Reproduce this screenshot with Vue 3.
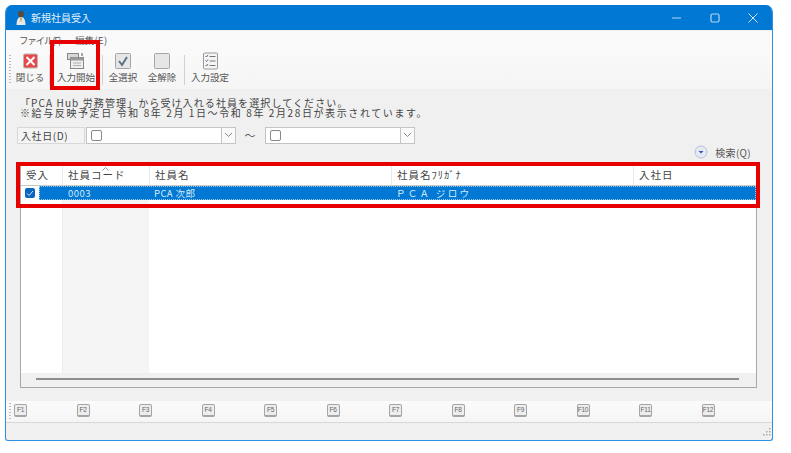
<script setup>
const columns = [
  { label: '受入', width: 42 },
  { label: '社員コード', width: 87, sorted: true },
  { label: '社員名', width: 242 },
  { label: '社員名ﾌﾘｶﾞﾅ', width: 242 },
  { label: '入社日', width: 122 },
]
const fkeys = ['F1','F2','F3','F4','F5','F6','F7','F8','F9','F10','F11','F12']
</script>

<template>
  <div class="page">
    <div class="window">
      <header class="title">
        <svg class="app-icon" width="12" height="16" viewBox="0 0 12 16">
          <ellipse cx="6" cy="4" rx="3" ry="3.2" fill="#5a4a3a"/>
          <path d="M1.5 15c0-5 1.5-8 4.500-8s4.500 3 4.500 8z" fill="#e8e8e8"/>
          <path d="M5 7.500h2l-.5 4h-1z" fill="#c9a24a"/>
        </svg>
        <span class="title-text">新規社員受入</span>
        <div class="caption">
          <svg width="12" height="12" viewBox="0 0 12 12"><path d="M1 6h9" stroke="#b5d5f0" stroke-width="1"/></svg>
          <svg width="12" height="12" viewBox="0 0 12 12"><rect x="2" y="2" width="8" height="8" rx="1.500" fill="none" stroke="#b5d5f0" stroke-width="1.200"/></svg>
          <svg width="12" height="12" viewBox="0 0 12 12"><path d="M1.500 1.500l9 9M10.500 1.500l-9 9" stroke="#cfe4f5" stroke-width="1"/></svg>
        </div>
      </header>

      <nav class="menu">
        <span class="m-file">ファイル(F)</span>
        <span class="m-edit">編集(E)</span>
      </nav>

      <div class="toolbar">
        <div class="grip"></div>
        <button class="tool t-close">
          <svg width="15" height="15" viewBox="0 0 15 15">
            <rect x=".5" y=".5" width="14" height="14" rx="1.500" fill="#e8484a" stroke="#b9b9b9"/>
            <path d="M3.500 3.500l8 8M11.500 3.500l-8 8" stroke="#fff" stroke-width="2"/>
          </svg>
          <span>閉じる</span>
        </button>
        <i class="sep"></i>
        <button class="tool t-start">
          <svg width="18" height="16" viewBox="0 0 18 16">
            <rect x=".5" y=".5" width="11" height="6" fill="#d8d8d8" stroke="#888"/>
            <rect x="3.500" y="4.500" width="13" height="11" fill="#eee" stroke="#888"/>
            <rect x="3.500" y="4.500" width="13" height="3" fill="#9a9a9a"/>
            <path d="M6 10h8M6 12.500h8" stroke="#b0b0b0"/>
            <path d="M15 0v3" stroke="#555"/>
          </svg>
          <span>入力開始</span>
        </button>
        <i class="sep"></i>
        <button class="tool t-all">
          <svg width="16" height="16" viewBox="0 0 16 16">
            <rect x=".5" y=".5" width="15" height="15" rx="1" fill="#e6e6e6" stroke="#a5a5a5"/>
            <path d="M4 8l3 4 5-8" fill="none" stroke="#5c7488" stroke-width="2"/>
          </svg>
          <span>全選択</span>
        </button>
        <button class="tool t-none">
          <svg width="16" height="16" viewBox="0 0 16 16">
            <rect x=".5" y=".5" width="15" height="15" rx="1" fill="#e6e6e6" stroke="#a5a5a5"/>
          </svg>
          <span>全解除</span>
        </button>
        <i class="sep"></i>
        <button class="tool t-set">
          <svg width="15" height="17" viewBox="0 0 15 17">
            <rect x=".5" y=".5" width="14" height="16" rx="1" fill="#f5f5f5" stroke="#999"/>
            <path d="M6.500 4h6M6.500 8.500h6M6.500 13h6" stroke="#777"/>
            <path d="M2.500 3.500l1 1 1.500-2M2.500 8l1 1 1.500-2M2.500 12.500l1 1 1.500-2" fill="none" stroke="#557" stroke-width=".9"/>
          </svg>
          <span>入力設定</span>
        </button>
      </div>

      <main class="body">
        <div class="notes">
          <p class="n1">「PCA Hub 労務管理」から受け入れる社員を選択してください。</p>
          <p class="n2">※給与反映予定日 令和 8年 2月 1日～令和 8年 2月28日が表示されています。</p>
        </div>

        <div class="filter">
          <label class="filter-label">入社日(D)</label>
          <div class="date">
            <i class="cb"></i>
            <span class="drop"><svg width="9" height="6" viewBox="0 0 9 6"><path d="M1 1l3.500 3.500L8 1" fill="none" stroke="#8a8a8a"/></svg></span>
          </div>
          <span class="tilde">～</span>
          <div class="date">
            <i class="cb"></i>
            <span class="drop"><svg width="9" height="6" viewBox="0 0 9 6"><path d="M1 1l3.500 3.500L8 1" fill="none" stroke="#8a8a8a"/></svg></span>
          </div>
        </div>

        <div class="search">
          <svg width="14" height="14" viewBox="0 0 14 14">
            <circle cx="7" cy="7" r="6" fill="#e4e9f4" stroke="#b4bfd6"/>
            <path d="M4.500 6h5L7 8.500z" fill="#3a55a8"/>
          </svg>
          <span>検索(Q)</span>
        </div>

        <div class="grid">
          <div class="head">
            <div v-for="c in columns" :key="c.label" class="hcell" :style="{ width: c.width + 'px' }">
              <svg v-if="c.sorted" class="sort" width="7" height="4" viewBox="0 0 7 4"><path d="M.5 3.500l3-3 3 3" fill="none" stroke="#999"/></svg>
              {{ c.label }}
            </div>
          </div>
          <div class="row">
            <div class="check-cell">
              <span class="check">
                <svg width="8" height="7" viewBox="0 0 8 7"><path d="M1 3.500l2 2 4-4.500" fill="none" stroke="#cfe3f5" stroke-width="1"/></svg>
              </span>
            </div>
            <div class="selected">
              <span class="c-code">0003</span>
              <span class="c-name">PCA 次郎</span>
              <span class="c-kana">ＰＣＡ ジロウ</span>
            </div>
          </div>
          <div class="rows-fill">
            <div class="fill-a"></div>
            <div class="fill-b"></div>
          </div>
          <div class="hscroll"><i></i></div>
        </div>
      </main>

      <div class="fbar">
        <div class="grip small"></div>
        <div class="fkeys">
          <div v-for="k in fkeys" :key="k" class="fslot"><span class="fkey">{{ k }}</span></div>
        </div>
      </div>

      <footer class="status">
        <svg class="size-grip" width="11" height="11" viewBox="0 0 11 11" fill="#aaa">
          <rect x="8" y="0" width="1.500" height="1.500"/><rect x="8" y="3" width="1.500" height="1.500"/><rect x="5" y="3" width="1.500" height="1.500"/>
          <rect x="8" y="6" width="1.500" height="1.500"/><rect x="5" y="6" width="1.500" height="1.500"/><rect x="2" y="6" width="1.500" height="1.500"/>
        </svg>
      </footer>
    </div>

    <div class="mark mark-a"></div>
    <div class="mark mark-b"></div>
  </div>
</template>

<style>
html, body { margin: 0; background: #fff; }
</style>

<style scoped>
.page {
  position: relative;
  width: 791px;
  height: 453px;
  padding: 5px 0 0 5px;
  box-sizing: border-box;
  overflow: hidden;
  background: #fff;
  font-family: "Noto Sans CJK JP", "Noto Sans", sans-serif;
  font-size: 10px;
  color: #444;
}
.window {
  width: 768px;
  height: 436px;
  box-sizing: border-box;
  border: 1px solid #2f8fe0;
  border-top: 0;
  border-radius: 7px 7px 3px 3px;
  overflow: hidden;
  background: #f0f0f0;
  display: flex;
  flex-direction: column;
}
.title {
  height: 25px;
  flex: none;
  background: #0078d4;
  display: flex;
  align-items: center;
  padding-left: 9px;
  box-sizing: border-box;
  color: #e6f2fb;
}
.app-icon { flex: none; }
.title-text { margin-left: 4px; font-size: 10px; }
.caption { margin-left: auto; display: flex; gap: 26px; padding-right: 13px; align-items: center; }
.caption svg { display: block; }
.menu {
  height: 20px;
  flex: none;
  margin-top: 1px;
  background: #f9f9f9;
  display: flex;
  padding: 1px 0 0 13px;
  box-sizing: border-box;
  font-size: 9.500px;
  line-height: 16px;
  color: #555;
}
.m-file { width: 56px; flex: none; letter-spacing: -1.200px; white-space: nowrap; }
.m-edit { flex: none; letter-spacing: .3px; white-space: nowrap; }
.toolbar {
  height: 38px;
  flex: none;
  background: linear-gradient(#fafafa, #f5f5f5);
  display: flex;
  align-items: flex-start;
  padding: 1px 0 0 3px;
  box-sizing: border-box;
}
.grip {
  width: 2px;
  height: 30px;
  margin-top: 3px;
  background: repeating-linear-gradient(#bbb 0 1px, transparent 1px 3px);
  flex: none;
}
.grip.small { height: 16px; margin: 2px 0 0 0; }
.tool {
  all: unset;
  display: flex;
  flex-direction: column;
  align-items: center;
  height: 34px;
  font-size: 9.500px;
  line-height: 13px;
  color: #555;
  white-space: nowrap;
  flex: none;
}
.tool svg { display: block; height: 18px; margin-bottom: 1px; }
.t-close { width: 38px; }
.t-start { width: 52px; }
.t-all { width: 40px; }
.t-none { width: 38px; margin-right: 3px; }
.t-set { width: 50px; }
.sep { width: 1px; height: 30px; margin-top: 3px; background: #d2d2d2; flex: none; }
.body { flex: none; height: 312px; padding: 9px 14px 0; box-sizing: border-box; display: flex; flex-direction: column; }
.notes { font-size: 10px; line-height: 10px; color: #444; }
.notes p { margin: 0; white-space: nowrap; }
.n1 { letter-spacing: 1.100px; }
.n2 { letter-spacing: 1.600px; }
.filter { display: flex; align-items: center; height: 18px; margin: 8px 0 0 -3px; }
.filter-label {
  width: 68px;
  height: 17px;
  box-sizing: border-box;
  background: #f4f4f4;
  border: 1px solid #d8d8d8;
  padding-left: 3px;
  line-height: 15px;
  font-size: 10px;
  letter-spacing: .6px;
  color: #444;
}
.date {
  width: 150px;
  height: 17px;
  box-sizing: border-box;
  border: 1px solid #c4c4c4;
  background: #fff;
  display: flex;
  align-items: center;
  margin-left: 1px;
}
.cb { width: 9px; height: 9px; border: 1px solid #888; border-radius: 2px; margin-left: 4px; }
.drop {
  margin-left: auto;
  width: 13px;
  height: 15px;
  border-left: 1px solid #c4c4c4;
  background: #fafafa;
  display: flex;
  align-items: center;
  justify-content: center;
}
.tilde { width: 28px; text-align: center; font-size: 11px; color: #555; }
.search {
  align-self: flex-end;
  display: flex;
  align-items: center;
  gap: 7px;
  height: 14px;
  margin: 1px 7px 1px 0;
  font-size: 10px;
  letter-spacing: .3px;
  color: #555;
}
.grid {
  width: 737px;
  height: 223px;
  flex: none;
  margin: 5px 0 0 0;
  box-sizing: border-box;
  border: 1px solid #a8a8a8;
  background: #fff;
  display: flex;
  flex-direction: column;
}
.head { display: flex; height: 20px; flex: none; border-bottom: 1px solid #c8c8c8; box-sizing: border-box; }
.hcell {
  position: relative;
  flex: none;
  box-sizing: border-box;
  border-right: 1px solid #eaeaea;
  padding-left: 5px;
  font-size: 10.500px;
  line-height: 18px;
  letter-spacing: 1px;
  color: #444;
  white-space: nowrap;
}
.hcell:last-child { border-right: 0; flex: 1; }
.sort { position: absolute; left: 39px; top: 1px; }
.row { display: flex; height: 14px; flex: none; }
.check-cell { width: 18px; flex: none; display: flex; align-items: center; padding-left: 4px; box-sizing: border-box; }
.check {
  width: 10px;
  height: 10px;
  border-radius: 2px;
  background: #0a67c0;
  display: flex;
  align-items: center;
  justify-content: center;
}
.selected {
  flex: 1;
  background: #0078d4;
  color: #d8ebf9;
  position: relative;
  display: flex;
  align-items: center;
  font-size: 9.500px;
  line-height: 13px;
  outline: 1px dotted #9cc7ea;
  outline-offset: -1px;
}
.c-code { width: 110px; padding-left: 29px; box-sizing: border-box; flex: none; letter-spacing: .5px; }
.c-name { width: 242px; padding-left: 5px; box-sizing: border-box; flex: none; letter-spacing: .4px; }
.c-kana { padding-left: 5px; letter-spacing: 2.300px; }
.rows-fill { flex: 1; display: flex; min-height: 0; }
.fill-a { width: 42px; border-right: 1px solid #ececec; box-sizing: border-box; }
.fill-b { width: 86px; background: #f5f5f5; }
.hscroll {
  height: 14px;
  flex: none;
  background: #f0f0f0;
  display: flex;
  align-items: center;
  padding: 0 17px 2px 15px;
  box-sizing: border-box;
}
.hscroll i { flex: 1; height: 2px; background: #8e8e8e; }
.fbar {
  height: 22px;
  flex: none;
  background: linear-gradient(#fbfbfb, #f5f5f5);
  border-bottom: 1px solid #d8d8d8;
  box-sizing: border-box;
  display: flex;
  padding-left: 3px;
}
.fkeys { display: flex; margin-left: 3px; }
.fslot { width: 62.500px; flex: none; padding-top: 3px; }
.fkey {
  display: block;
  width: 13px;
  height: 13px;
  box-sizing: border-box;
  border: 1px solid #a5a5a5;
  border-bottom-width: 2px;
  border-radius: 2px;
  background: #ededed;
  font-family: "Liberation Sans", sans-serif;
  font-size: 6.500px;
  line-height: 10px;
  text-align: center;
  color: #666;
  white-space: nowrap;
  letter-spacing: -.2px;
}
.status { flex: 1; position: relative; }
.size-grip { position: absolute; right: 0; bottom: 1px; }
.mark { position: absolute; box-sizing: border-box; border: 4px solid #e60000; }
.mark-a { left: 50px; top: 40px; width: 50px; height: 50px; }
.mark-b { left: 16px; top: 162px; width: 744px; height: 46px; }
</style>
